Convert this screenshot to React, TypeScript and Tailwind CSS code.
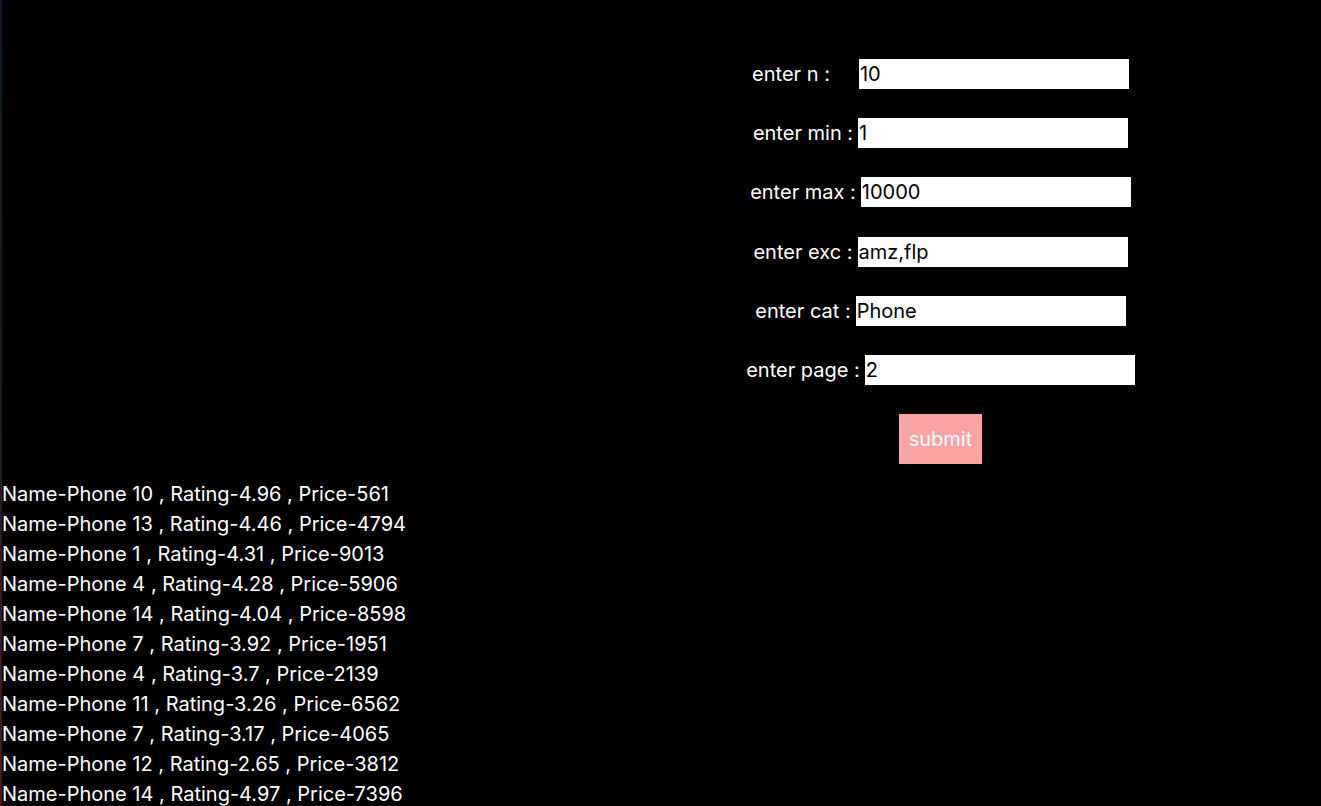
import React from "react";

const rows = [
  { label: "enter n :", value: "10", pad: "pr-[29px]" },
  { label: "enter min :", value: "1", pad: "pr-[5px]" },
  { label: "enter max :", value: "10000", pad: "pr-[5px]" },
  { label: "enter exc :", value: "amz,flp", pad: "pr-[5px]" },
  { label: "enter cat :", value: "Phone", pad: "pr-[5px]" },
  { label: "enter page :", value: "2", pad: "pr-[5px]" },
];

const results = [
  "Name-Phone 10 , Rating-4.96 , Price-561",
  "Name-Phone 13 , Rating-4.46 , Price-4794",
  "Name-Phone 1 , Rating-4.31 , Price-9013",
  "Name-Phone 4 , Rating-4.28 , Price-5906",
  "Name-Phone 14 , Rating-4.04 , Price-8598",
  "Name-Phone 7 , Rating-3.92 , Price-1951",
  "Name-Phone 4 , Rating-3.7 , Price-2139",
  "Name-Phone 11 , Rating-3.26 , Price-6562",
  "Name-Phone 7 , Rating-3.17 , Price-4065",
  "Name-Phone 12 , Rating-2.65 , Price-3812",
  "Name-Phone 14 , Rating-4.97 , Price-7396",
];

export default function App() {
  return (
    <div
      className="relative min-h-screen bg-black text-white text-[20px] leading-[30px]"
      style={{ fontFamily: "Inter, 'Noto Sans', sans-serif" }}
    >
      <div className="absolute left-0 top-0 h-full w-[2px] bg-gradient-to-b from-[#0d1a2a] via-[#1c1c18] to-[#4a1a14]" />
      <div className="flex justify-end pt-[59px]">
        <form className="w-[761px] flex flex-col items-center gap-[29.2px]">
          {rows.map((r) => (
            <div key={r.label} className="flex items-center h-[30px]">
              <span className={r.pad}>{r.label}</span>
              <input
                defaultValue={r.value}
                className="w-[270px] h-[30px] bg-white text-black px-[1px] outline-none border-0 text-[20px]"
                style={{ fontFamily: "Inter, 'Noto Sans', sans-serif" }}
              />
            </div>
          ))}
          <button
            type="button"
            className="w-[83px] h-[50px] bg-[#f9a4a4] text-white text-[20px]"
          >
            submit
          </button>
        </form>
      </div>
      <div className="pt-[15px] pl-[2px]">
        {results.map((t, i) => (
          <div key={i}>{t}</div>
        ))}
      </div>
    </div>
  );
}
